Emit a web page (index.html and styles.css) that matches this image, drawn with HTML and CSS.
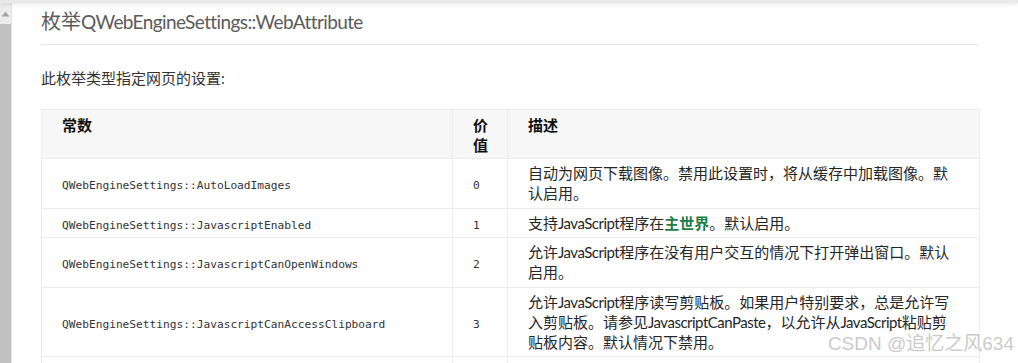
FILE: index.html
```html
<!DOCTYPE html>
<html lang="zh-CN">
<head>
<meta charset="utf-8">
<title>QWebEngineSettings::WebAttribute</title>
<link rel="stylesheet" href="styles.css">
</head>
<body>
<div class="topbar"></div>
<div class="layout">
  <div class="scrollbar">
    <div class="sb-button">
      <svg width="9" height="6" viewBox="0 0 9 6"><path d="M0.5 5.5 L4.5 0.8 L8.5 5.5 Z" fill="#a3a3a3"/></svg>
    </div>
    <div class="sb-thumb"></div>
  </div>
  <main class="content">
    <h2 class="title">枚举<span class="latin title-latin">QWebEngineSettings::WebAttribute</span></h2>
    <p class="intro">此枚举类型指定网页的设置<span class="latin">:</span></p>
    <table class="values">
      <colgroup>
        <col class="c-const">
        <col class="c-val">
        <col class="c-desc">
      </colgroup>
      <thead>
        <tr><th>常数</th><th>价值</th><th>描述</th></tr>
      </thead>
      <tbody>
        <tr>
          <td><code>QWebEngineSettings::AutoLoadImages</code></td>
          <td><code>0</code></td>
          <td>自动为网页下载图像。禁用此设置时，将从缓存中加载图像。默认启用。</td>
        </tr>
        <tr>
          <td><code>QWebEngineSettings::JavascriptEnabled</code></td>
          <td><code>1</code></td>
          <td>支持<span class="latin">JavaScript</span>程序在<a class="link" href="#">主世界</a>。默认启用。</td>
        </tr>
        <tr>
          <td><code>QWebEngineSettings::JavascriptCanOpenWindows</code></td>
          <td><code>2</code></td>
          <td>允许<span class="latin">JavaScript</span>程序在没有用户交互的情况下打开弹出窗口。默认启用。</td>
        </tr>
        <tr>
          <td><code>QWebEngineSettings::JavascriptCanAccessClipboard</code></td>
          <td><code>3</code></td>
          <td>允许<span class="latin">JavaScript</span>程序读写剪贴板。如果用户特别要求，总是允许写入剪贴板。请参见<span class="latin">JavascriptCanPaste</span>，以允许从<span class="latin">JavaScript</span>粘贴剪贴板内容。默认情况下禁用。</td>
        </tr>
        <tr>
          <td><code>QWebEngineSettings::LinksIncludedInFocusChain</code></td>
          <td><code>4</code></td>
          <td>在键盘焦点链中包括超链接。默认启用。</td>
        </tr>
      </tbody>
    </table>
  </main>
</div>
<div class="watermark">CSDN @追忆之风634</div>
</body>
</html>
```

FILE: styles.css
```css
html, body {
  margin: 0;
  padding: 0;
  background: #ffffff;
  height: 363px;
  overflow: hidden;
}

body {
  font-family: "Noto Sans CJK SC", "Noto Sans", sans-serif;
  color: #333333;
  position: relative;
}

.latin {
  font-family: Lato, "Open Sans", sans-serif;
  letter-spacing: -0.5px;
}

.title-latin {
  font-size: 19px;
  letter-spacing: -0.6px;
}

.topbar {
  height: 3px;
  background: #e9e9e9;
  box-shadow: 0 1px 4px rgba(0, 0, 0, 0.12);
  position: relative;
  z-index: 2;
}

.layout {
  display: flex;
  align-items: stretch;
  height: 360px;
}

.scrollbar {
  width: 11px;
  border-right: 1px solid #e4e4e4;
  display: flex;
  flex-direction: column;
  background: #f1f1f1;
  flex: none;
}

.sb-button {
  height: 21px;
  display: flex;
  align-items: center;
  justify-content: center;
  background: #ececec;
}

.sb-button svg {
  display: block;
  margin-top: 1px;
}

.sb-thumb {
  flex: 1;
  background: #c1c1c1;
}

.content {
  padding-left: 29px;
  width: 938px;
  flex: none;
}

.title {
  margin: 4px 0 0 0;
  font-size: 20px;
  line-height: 28px;
  font-weight: 400;
  color: #5b5b5b;
  padding-bottom: 8px;
  border-bottom: 1px solid #e6e6e6;
}

.intro {
  margin: 23px 0 21px 0;
  font-size: 15px;
  line-height: 20px;
  color: #333333;
}

.values {
  width: 938px;
  table-layout: fixed;
  border-collapse: collapse;
  border: 1px solid #ececec;
  font-size: 15px;
  line-height: 20px;
}

.c-const { width: 411px; }
.c-val { width: 55px; }
.c-desc { width: 472px; }

.values th {
  background: #f7f7f7;
  text-align: left;
  vertical-align: top;
  font-weight: 700;
  color: #111111;
  padding: 5px 20px 3px;
  border: 1px solid #ececec;
}

.values td {
  padding: 4px 20px 4.5px;
  border: 1px solid #ececec;
  vertical-align: middle;
  color: #262626;
}

.values code {
  font-family: "DejaVu Sans Mono", "Liberation Mono", monospace;
  font-size: 11.2px;
  line-height: 1;
  color: #333333;
}

.link {
  color: #1b7d48;
  font-weight: 600;
  text-decoration: none;
}

.watermark {
  position: absolute;
  right: 4px;
  top: 333px;
  font-family: "Liberation Sans", "Noto Sans CJK SC", sans-serif;
  font-size: 19px;
  line-height: 22px;
  color: #cbcbcb;
  white-space: nowrap;
  text-shadow: 0 0 1px #ffffff;
}
```
